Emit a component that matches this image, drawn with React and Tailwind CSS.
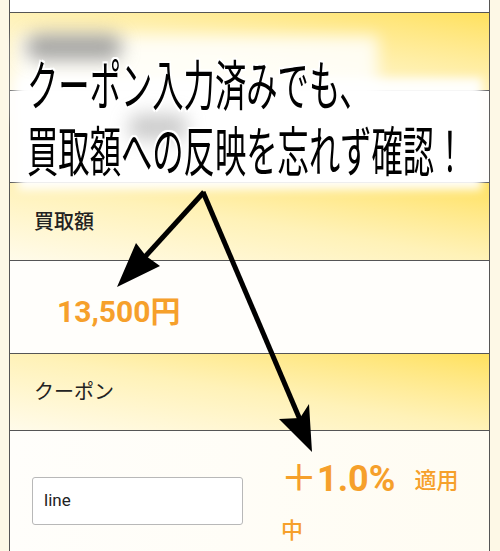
import React from 'react';

const yellow = 'bg-linear-to-tr from-[#fffbea] via-[#fff2b8] to-[#ffe15c]';

export default function App() {
  return (
    <div className="relative h-[551px] w-[500px] overflow-hidden bg-[#fdf8e6] font-['Roboto','Noto_Sans_CJK_JP',sans-serif] text-[#222]">
      <div className="ml-[9px] w-[481px] border-x-[1.5px] border-[#555]">
        <div className="h-[13px] border-b-[1.5px] border-[#555] bg-white" />
        <div className={`h-[78px] border-b-[1.5px] border-[#555] ${yellow}`} />
        <div className="h-[92px] border-b-[1.5px] border-[#555] bg-[#fffefb]" />
        <div className={`flex h-[78px] items-center border-b-[1.5px] border-[#555] pl-[24px] text-[20px] font-medium ${yellow}`}>
          買取額
        </div>
        <div className="flex h-[93px] items-center border-b-[1.5px] border-[#555] bg-[#fffefb] pl-[47px] pt-[8px] text-[30px] font-bold text-[#f6a02b]">
          13,500円
        </div>
        <div className={`flex h-[77px] items-center border-b-[1.5px] border-[#555] pl-[24px] text-[20px] ${yellow}`}>
          クーポン
        </div>
        <div className="flex h-[130px] items-start bg-linear-to-r from-[#fffefb] to-[#fffcf2] pl-[22px]">
          <div className="mt-[46px] flex h-[48px] w-[211px] items-center rounded-[3px] border border-[#b8b8b8] bg-white px-[11px] text-[17px]">
            line
          </div>
          <div className="mt-[26px] ml-[38px] w-[188px] text-[#f6a02b] leading-[45px]">
            <span className="text-[36px] font-medium">＋</span>
            <span className="text-[36px] font-bold">1.0%</span>
            <span className="ml-[19px] inline-block translate-y-[-3px] text-[22px] font-medium">適用</span>
            <span className="text-[22px] font-medium">中</span>
          </div>
        </div>
      </div>

      {/* white glow behind the caption */}
      <div className="pointer-events-none absolute left-[16px] top-[36px] h-[84px] w-[362px] bg-white/85 blur-[8px]" />
      <div className="pointer-events-none absolute left-[18px] top-[78px] h-[112px] w-[464px] bg-white/95 blur-[5px]" />
      {/* blurred marks */}
      <div className="pointer-events-none absolute left-[26px] top-[34px] h-[26px] w-[96px] rounded-full bg-[#808080]/70 blur-[9px]" />
      <div className="pointer-events-none absolute left-[128px] top-[114px] h-[26px] w-[60px] rounded-full bg-[#9a9a9a]/50 blur-[9px]" />

      <div className="pointer-events-none absolute left-[27px] top-[50px] origin-left scale-x-[0.58] whitespace-nowrap font-['Noto_Sans_CJK_JP',sans-serif] text-[54px] leading-[66px] text-black [text-shadow:-2px_-2px_0_#fff,2px_-2px_0_#fff,-2px_2px_0_#fff,2px_2px_0_#fff,0_0_5px_#fff]">
        <div>クーポン入力済みでも、</div>
        <div>買取額への反映を忘れず確認！</div>
      </div>

      <svg className="pointer-events-none absolute left-0 top-0" width="500" height="551" viewBox="0 0 500 551">
        <line x1="204" y1="192" x2="143" y2="259" stroke="#000" strokeWidth="5" />
        <polygon points="117,287 136,243 146,256 160,266" fill="#000" />
        <line x1="203" y1="192" x2="301" y2="422" stroke="#000" strokeWidth="5" />
        <polygon points="312,452 279,419 300,418 309,404" fill="#000" />
      </svg>
    </div>
  );
}
